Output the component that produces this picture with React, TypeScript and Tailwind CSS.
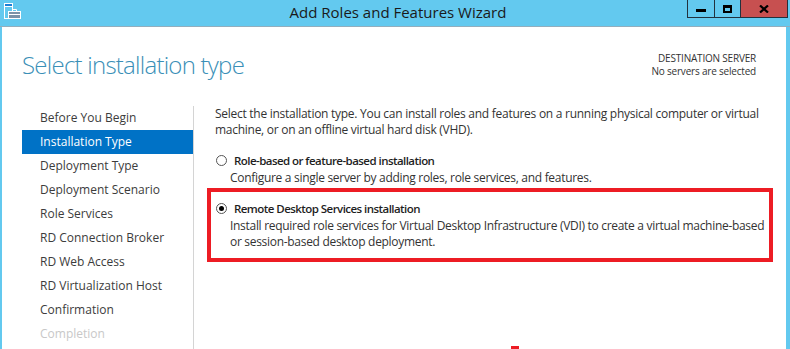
const font = "font-['Open_Sans','Noto_Sans',sans-serif]";

const steps = [
  "Before You Begin",
  "Installation Type",
  "Deployment Type",
  "Deployment Scenario",
  "Role Services",
  "RD Connection Broker",
  "RD Web Access",
  "RD Virtualization Host",
  "Confirmation",
  "Completion",
];

function WizardIcon() {
  return (
    <svg width="22" height="22" viewBox="0 0 22 22" className="ml-[2px] mt-[1px]">
      <rect x="2.5" y="2.5" width="8" height="15" fill="#63c9ef" stroke="#fff" />
      <rect x="2.5" y="2.5" width="8" height="3" fill="#1b7fd6" stroke="#fff" />
      <rect x="6.5" y="10.5" width="12" height="7" fill="#7b93a8" stroke="#fff" />
      <path d="M10.5 10.5V8.5h4v2" fill="none" stroke="#fff" />
      <path d="M6.5 13.5h12" stroke="#fff" />
    </svg>
  );
}

function Radio({ checked }: { checked?: boolean }) {
  return (
    <span className="flex h-[11px] w-[11px] shrink-0 items-center justify-center rounded-full border border-[#555] bg-white">
      {checked ? <span className="h-[5px] w-[5px] rounded-full bg-black" /> : null}
    </span>
  );
}

function Option({ checked, title, lines }: { checked?: boolean; title: string; lines: string[] }) {
  return (
    <div>
      <div className="flex h-[19px] items-center gap-[7px]">
        <Radio checked={checked} />
        <span className="text-[11.5px] font-semibold tracking-[-0.55px] text-[#1e1e1e]">{title}</span>
      </div>
      <div className="pl-[14px] text-[12px] leading-[16px] tracking-[-0.3px] text-[#333]">
        {lines.map((l) => (
          <div key={l} className="whitespace-nowrap">
            {l}
          </div>
        ))}
      </div>
    </div>
  );
}

export default function App() {
  return (
    <div className={`flex h-[349px] w-[790px] flex-col overflow-hidden bg-[#63c9ef] ${font}`}>
      {/* title bar */}
      <div className="grid h-[27px] shrink-0 grid-cols-[1fr_auto_1fr] border-b border-[#93aebd]">
        <div className="flex items-start">
          <WizardIcon />
        </div>
        <div className="pl-[6px] pt-[2px] text-[15px] leading-[20px] text-[#1a1a1a]">Add Roles and Features Wizard</div>
        <div className="flex items-start justify-end pr-[2px]">
          <div className="flex h-[18px] border border-t-0 border-[#22313d]">
            <div className="flex w-[27px] items-center justify-center border-r border-[#22313d]">
              <span className="mt-[4px] h-[3px] w-[10px] bg-black" />
            </div>
            <div className="flex w-[26px] items-center justify-center border-r border-[#22313d]">
              <span className="h-[8px] w-[9px] border-2 border-t-[3px] border-black" />
            </div>
            <div className="flex w-[46px] items-center justify-center bg-[#c75050]">
              <svg width="10" height="8" viewBox="0 0 10 8">
                <path d="M1 0.5l8 7M9 0.5l-8 7" stroke="#000" strokeWidth="2.2" />
              </svg>
            </div>
          </div>
        </div>
      </div>

      {/* body */}
      <div className="relative ml-[2px] mr-[4px] flex flex-1 flex-col bg-white">
        <div className="flex h-[79px] shrink-0 items-start justify-between pl-[20px] pr-[30px]">
          <h1 className="pt-[25px] text-[24px] font-light leading-[25px] tracking-[-0.75px] text-[#3a8fb7]">
            Select installation type
          </h1>
          <div className="pt-[25px] text-right text-[10px] leading-[13px] tracking-[-0.2px] text-[#333]">
            <div>DESTINATION SERVER</div>
            <div>No servers are selected</div>
          </div>
        </div>

        <div className="flex flex-1">
          <div className="ml-[20px] w-[172px] border-r border-[#d4d4d4]">
            {steps.map((s, i) => (
              <div
                key={s}
                className={
                  i === 1
                    ? "h-[24px] bg-[#0072c6] pl-[18px] text-[12px] leading-[24px] text-white"
                    : i === 9
                      ? "h-[24px] pl-[18px] text-[12px] leading-[24px] text-[#c8c8c8]"
                      : "h-[24px] pl-[18px] text-[12px] leading-[24px] text-[#3c3c3c]"
                }
              >
                {s}
              </div>
            ))}
          </div>

          <div className="flex-1 pl-[21px]">
            <p className="text-[12px] leading-[16px] tracking-[-0.27px] text-[#333]">
              <span className="block whitespace-nowrap">
                Select the installation type. You can install roles and features on a running physical computer or virtual
              </span>
              <span className="block whitespace-nowrap">machine, or on an offline virtual hard disk (VHD).</span>
            </p>
            <div className="mt-[13px] pl-[1px]">
              <Option
                title="Role-based or feature-based installation"
                lines={["Configure a single server by adding roles, role services, and features."]}
              />
            </div>
            <div className="ml-[-8px] mt-[2px] w-[566px] border-4 border-[#ed1c24] pb-[8px] pl-[5px] pt-[7px]">
              <Option
                checked
                title="Remote Desktop Services installation"
                lines={[
                  "Install required role services for Virtual Desktop Infrastructure (VDI) to create a virtual machine-based",
                  "or session-based desktop deployment.",
                ]}
              />
            </div>
          </div>
        </div>

        <span className="absolute bottom-0 left-[509px] h-[3px] w-[8px] bg-[#ed1c24]" />
      </div>
    </div>
  );
}
